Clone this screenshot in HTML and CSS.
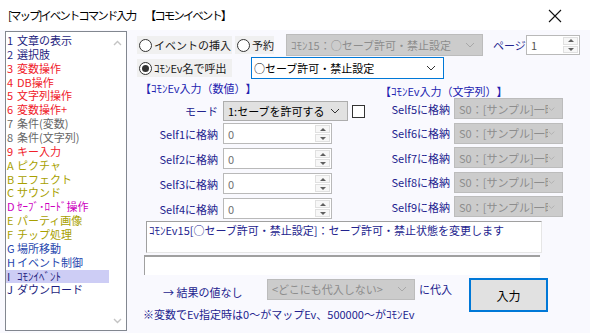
FILE: index.html
```html
<!DOCTYPE html>
<html lang="ja">
<head>
  <meta charset="UTF-8">
  <meta name="viewport" content="width=device-width, initial-scale=1.0">
  <title>イベントコマンド入力</title>
  <link rel="stylesheet" href="styles.css">
</head>
<body>
  <div class="titlebar">
    <span class="title">[マップ]イベントコマンド入力　【コモンイベント】</span>
    <svg class="close" width="14" height="14" viewBox="0 0 14 14"><path d="M1 1 L13 13 M13 1 L1 13" stroke="#111" stroke-width="1.1" fill="none"/></svg>
  </div>

  <div class="main">
    <div class="cmdlist">
      <ul class="items">
        <li class="navy"><span class="key">1</span>文章の表示</li>
        <li class="navy"><span class="key">2</span>選択肢</li>
        <li class="red"><span class="key">3</span>変数操作</li>
        <li class="red"><span class="key">4</span>DB操作</li>
        <li class="red"><span class="key">5</span>文字列操作</li>
        <li class="red"><span class="key">6</span>変数操作+</li>
        <li class="gray"><span class="key">7</span>条件(変数)</li>
        <li class="gray"><span class="key">8</span>条件(文字列)</li>
        <li class="red"><span class="key">9</span>キー入力</li>
        <li class="olive"><span class="key">A</span>ピクチャ</li>
        <li class="olive"><span class="key">B</span>エフェクト</li>
        <li class="olive"><span class="key">C</span>サウンド</li>
        <li class="magenta"><span class="key">D</span>ｾｰﾌﾞ･ﾛｰﾄﾞ操作</li>
        <li class="olive"><span class="key">E</span>パーティ画像</li>
        <li class="olive"><span class="key">F</span>チップ処理</li>
        <li class="blue"><span class="key">G</span>場所移動</li>
        <li class="blue"><span class="key">H</span>イベント制御</li>
        <li class="navy selected"><span class="key">I</span>ｺﾓﾝｲﾍﾞﾝﾄ</li>
        <li class="navy"><span class="key">J</span>ダウンロード</li>
      </ul>
      <div class="scroll">
        <svg width="9" height="6" viewBox="0 0 9 6"><path d="M1 5 L4.5 1.5 L8 5" stroke="#c4c4c4" stroke-width="1.4" fill="none"/></svg>
        <svg width="9" height="6" viewBox="0 0 9 6"><path d="M1 1 L4.5 4.5 L8 1" stroke="#c4c4c4" stroke-width="1.4" fill="none"/></svg>
      </div>
    </div>

    <div class="pane">
      <div class="row row-top">
        <label class="radio radio-wide"><span class="dot"></span>イベントの挿入</label>
        <label class="radio radio-short"><span class="dot"></span>予約</label>
        <div class="combo off combo-reserve">
          <span class="val">ｺﾓﾝ15：○セーブ許可・禁止設定</span>
          <svg class="chev" width="10" height="6" viewBox="0 0 10 6"><path d="M1 1 L5 5 L9 1" fill="none" stroke-width="1"/></svg>
        </div>
        <span class="page-label">ページ</span>
        <div class="spin spin-page">
          <span class="val">1</span>
          <span class="arrows"><span class="half"><i class="up"></i></span><span class="half"><i class="down"></i></span></span>
        </div>
      </div>

      <div class="row row-call">
        <label class="radio radio-wide"><span class="dot checked"></span>ｺﾓﾝEv名で呼出</label>
        <div class="combo focus combo-name">
          <span class="val">○セーブ許可・禁止設定</span>
          <svg class="chev" width="10" height="6" viewBox="0 0 10 6"><path d="M1 1 L5 5 L9 1" fill="none" stroke-width="1"/></svg>
        </div>
      </div>

      <div class="columns">
        <div class="col col-num">
          <div class="heading">【ｺﾓﾝEv入力（数値）】</div>
          <div class="field field-mode">
            <span class="label">モード</span>
            <div class="combo on combo-mode">
              <span class="val">1:セーブを許可する</span>
              <svg class="chev" width="10" height="6" viewBox="0 0 10 6"><path d="M1 1 L5 5 L9 1" fill="none" stroke-width="1"/></svg>
            </div>
            <span class="check"></span>
          </div>
          <div class="field">
            <span class="label">Self1に格納</span>
            <div class="spin spin-num"><span class="val">0</span><span class="arrows"><span class="half"><i class="up"></i></span><span class="half"><i class="down"></i></span></span></div>
          </div>
          <div class="field">
            <span class="label">Self2に格納</span>
            <div class="spin spin-num"><span class="val">0</span><span class="arrows"><span class="half"><i class="up"></i></span><span class="half"><i class="down"></i></span></span></div>
          </div>
          <div class="field">
            <span class="label">Self3に格納</span>
            <div class="spin spin-num"><span class="val">0</span><span class="arrows"><span class="half"><i class="up"></i></span><span class="half"><i class="down"></i></span></span></div>
          </div>
          <div class="field">
            <span class="label">Self4に格納</span>
            <div class="spin spin-num"><span class="val">0</span><span class="arrows"><span class="half"><i class="up"></i></span><span class="half"><i class="down"></i></span></span></div>
          </div>
        </div>

        <div class="col col-str">
          <div class="heading">【ｺﾓﾝEv入力（文字列）】</div>
          <div class="field">
            <span class="label">Self5に格納</span>
            <div class="combo off combo-str"><span class="val">S0：[サンプル]一時保存</span><svg class="chev" width="10" height="6" viewBox="0 0 10 6"><path d="M1 1 L5 5 L9 1" fill="none" stroke-width="1"/></svg></div>
          </div>
          <div class="field">
            <span class="label">Self6に格納</span>
            <div class="combo off combo-str"><span class="val">S0：[サンプル]一時保存</span><svg class="chev" width="10" height="6" viewBox="0 0 10 6"><path d="M1 1 L5 5 L9 1" fill="none" stroke-width="1"/></svg></div>
          </div>
          <div class="field">
            <span class="label">Self7に格納</span>
            <div class="combo off combo-str"><span class="val">S0：[サンプル]一時保存</span><svg class="chev" width="10" height="6" viewBox="0 0 10 6"><path d="M1 1 L5 5 L9 1" fill="none" stroke-width="1"/></svg></div>
          </div>
          <div class="field">
            <span class="label">Self8に格納</span>
            <div class="combo off combo-str"><span class="val">S0：[サンプル]一時保存</span><svg class="chev" width="10" height="6" viewBox="0 0 10 6"><path d="M1 1 L5 5 L9 1" fill="none" stroke-width="1"/></svg></div>
          </div>
          <div class="field">
            <span class="label">Self9に格納</span>
            <div class="combo off combo-str"><span class="val">S0：[サンプル]一時保存</span><svg class="chev" width="10" height="6" viewBox="0 0 10 6"><path d="M1 1 L5 5 L9 1" fill="none" stroke-width="1"/></svg></div>
          </div>
        </div>
      </div>

      <div class="desc">ｺﾓﾝEv15[○セーブ許可・禁止設定]：セーブ許可・禁止状態を変更します</div>
      <div class="line-box"></div>

      <div class="bottom">
        <div class="bottom-left">
          <div class="result">
            <span class="arrow-text">→ 結果の値なし</span>
            <div class="combo off combo-result"><span class="val">&lt;どこにも代入しない&gt;</span><svg class="chev" width="10" height="6" viewBox="0 0 10 6"><path d="M1 1 L5 5 L9 1" fill="none" stroke-width="1"/></svg></div>
            <span class="assign">に代入</span>
          </div>
          <div class="note">※変数でEv指定時は0～がマップEv、500000～がｺﾓﾝEv</div>
        </div>
        <button class="ok">入力</button>
      </div>
    </div>
  </div>
</body>
</html>
```

FILE: styles.css
```css
body {
  margin: 0;
  width: 590px;
  height: 333px;
  overflow: hidden;
  background: #f9f9fe;
  font-family: "Noto Sans CJK JP", "Noto Sans", sans-serif;
  font-size: 11px;
  color: #23238e;
  text-spacing-trim: space-all;
}
.titlebar {
  height: 30px;
  background: #fff;
  display: flex;
  align-items: center;
  justify-content: space-between;
  padding: 0 28px 0 8px;
}
.title {
  font-size: 11.5px;
  letter-spacing: -2px;
  color: #000;
}
.close {
  margin-top: 1px;
}
.main {
  display: flex;
  padding: 1px 0 0 5px;
}

/* command list */
.cmdlist {
  width: 120px;
  height: 298px;
  border: 1px solid #828790;
  background: #fff;
  display: flex;
}
.items {
  list-style: none;
  margin: 0;
  padding: 2px 0 0 0;
  width: 103px;
}
.items li {
  line-height: 13.87px;
  height: 13.87px;
  padding-left: 1px;
  white-space: nowrap;
  display: flex;
}
.items .key {
  width: 10px;
  flex: none;
}
.items li.selected {
  background: #cdcdf5;
}
.navy { color: #1e1e80; }
.red { color: #f0202a; }
.gray { color: #666; }
.olive { color: #a89f00; }
.magenta { color: #cc00c0; }
.blue { color: #2646ae; }
.scroll {
  flex: 1;
  display: flex;
  flex-direction: column;
  justify-content: space-between;
  align-items: center;
  padding: 8px 0 6px;
}

/* right pane */
.pane {
  margin-left: 10px;
  width: 453px;
}
.row {
  display: flex;
  align-items: center;
  height: 22px;
}
.row-top {
  margin-top: 3px;
}
.row-call {
  margin-top: 1px;
}
.radio {
  height: 18px;
  background: #f0f0f0;
  display: flex;
  align-items: center;
  padding-left: 2px;
  color: #1a1a1a;
  gap: 2px;
  box-sizing: border-box;
}
.radio-wide { width: 95px; }
.radio-short { width: 39px; margin-left: 3px; }
.dot {
  width: 13px;
  height: 13px;
  border: 1px solid #333;
  border-radius: 50%;
  background: #fff;
  box-sizing: border-box;
  display: flex;
  align-items: center;
  justify-content: center;
}
.dot.checked::after {
  content: "";
  width: 7px;
  height: 7px;
  border-radius: 50%;
  background: #333;
}

/* combo boxes */
.combo {
  height: 22px;
  box-sizing: border-box;
  display: flex;
  align-items: center;
  padding: 0 7px 0 4px;
  border: 1px solid #bcbcbc;
}
.combo .val {
  flex: 1;
  overflow: hidden;
  white-space: nowrap;
}
.combo.off {
  background: #cccccc;
  color: #8d8d8d;
}
.combo.off .chev path { stroke: #a8a8a8; }
.combo.on {
  background: #e1e1e1;
  border-color: #adadad;
  color: #000;
}
.combo.focus {
  background: #fff;
  border-color: #0078d7;
  color: #000;
}
.combo.on .chev path,
.combo.focus .chev path { stroke: #333; }
.combo-reserve { width: 197px; margin-left: 12px; }
.combo-name { width: 193px; margin-left: 19px; padding-left: 2px; }
.combo-mode { width: 125px; height: 20px; }
.combo-str { width: 109px; height: 21px; padding-left: 4px; }
.combo-str .val { flex: none; width: 89px; }
.combo-str .chev { margin-left: auto; }
.combo-result { width: 148px; height: 21px; margin-left: 29px; }

.page-label {
  margin-left: 10px;
  width: 33px;
}

/* spin inputs */
.spin {
  display: flex;
  align-items: stretch;
  background: #fff;
  border: 1px solid #b9b9b9;
  box-sizing: border-box;
  color: #707070;
}
.spin .val {
  flex: 1;
  padding-left: 4px;
  display: flex;
  align-items: center;
}
.spin-page { width: 54px; height: 20px; color: #555; }
.spin-num { width: 109px; height: 21px; }
.arrows {
  width: 15px;
  display: flex;
  flex-direction: column;
  gap: 1px;
  padding: 1px 1px 1px 0;
}
.half {
  flex: 1;
  border: 1px solid #e0e0e0;
  background: #f7f7f7;
  display: flex;
  align-items: center;
  justify-content: center;
}
.up, .down {
  width: 0;
  height: 0;
  border-left: 3px solid transparent;
  border-right: 3px solid transparent;
}
.up { border-bottom: 3px solid #606060; }
.down { border-top: 3px solid #606060; }

/* parameter columns */
.columns {
  display: flex;
  margin-top: 2px;
}
.col-num { width: 233px; }
.heading {
  line-height: 14px;
  color: #2222b0;
  white-space: nowrap;
}
.col-num .heading { padding-left: 3px; }
.col-str .heading { padding-left: 10px; margin-top: 3px; }
.field {
  display: flex;
  align-items: center;
  margin-top: 4px;
}
.field-mode { margin-top: 6px; margin-bottom: -2px; }
.label {
  width: 81px;
  text-align: right;
  padding-right: 5px;
  white-space: nowrap;
}
.col-str .label { width: 80px; padding-right: 4px; }
.col-str .field { margin-top: 3.5px; }
.col-str .heading + .field { margin-top: 0; }
.check {
  width: 13px;
  height: 13px;
  border: 1px solid #333;
  background: #fff;
  box-sizing: border-box;
  margin-left: 4px;
}

/* description */
.desc {
  margin: 2px 0 0 9px;
  width: 396px;
  height: 32px;
  box-sizing: border-box;
  background: #fff;
  border-top: 1px solid #a0a0a0;
  border-left: 1px solid #a0a0a0;
  border-right: 1px solid #e6e6e6;
  border-bottom: 1px solid #e6e6e6;
  padding: 1px 2px;
  line-height: 14px;
  white-space: nowrap;
  overflow: hidden;
}
.line-box {
  margin: 2px 0 0 7px;
  width: 396px;
  height: 20px;
  box-sizing: border-box;
  background: #fff;
  border-top: 2px solid #a0a0a0;
  border-left: 1px solid #a0a0a0;
}

/* result + submit */
.bottom {
  display: flex;
  margin-top: 3px;
}
.bottom-left { width: 332px; }
.result {
  display: flex;
  align-items: center;
}
.arrow-text {
  margin-left: 26px;
  width: 75px;
  padding-top: 6px;
  white-space: nowrap;
}
.assign { margin-left: 4px; }
.note {
  margin-top: 7px;
  padding-left: 6px;
  line-height: 14px;
  white-space: nowrap;
}
.ok {
  width: 79px;
  height: 34px;
  background: #e1e1e1;
  border: 2px solid #0078d7;
  font-family: inherit;
  font-size: 12px;
  color: #000;
  padding: 0;
}
```
